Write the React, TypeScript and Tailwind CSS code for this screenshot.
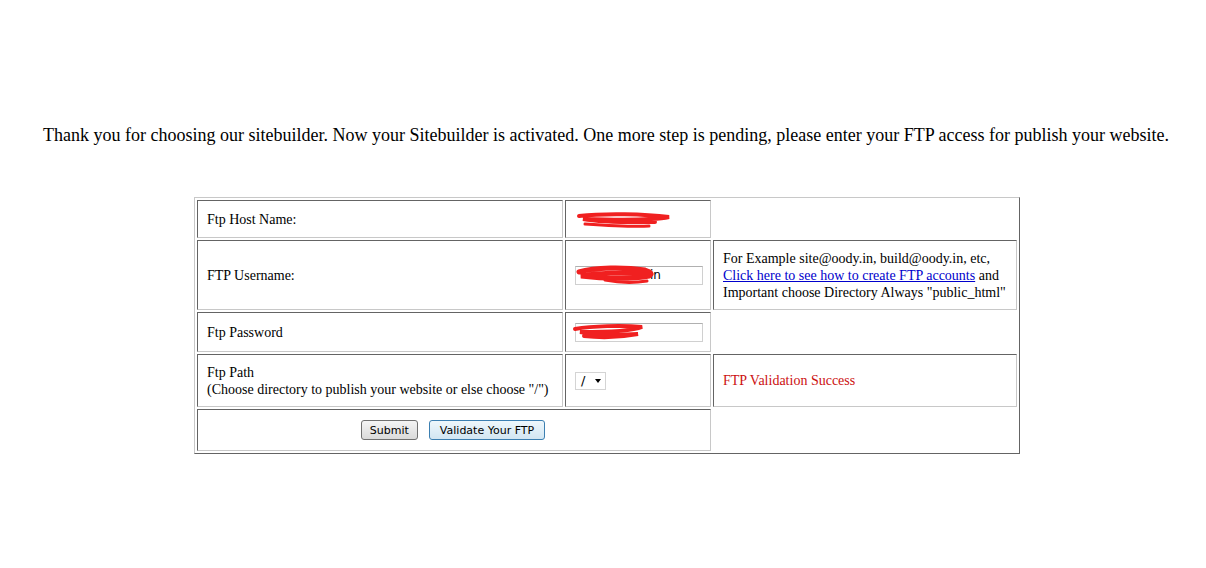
const serif = 'font-["Liberation_Serif","Times_New_Roman",serif]';
const cell =
  'border border-t-[#646464] border-l-[#646464] border-r-[#c8c8c8] border-b-[#c8c8c8] px-[9px] align-middle';
const btn =
  'h-[20px] rounded-[3px] border text-[11px] leading-none font-["DejaVu_Sans",sans-serif] text-black bg-gradient-to-b';

function Scribble({ variant }: { variant: 'host' | 'user' | 'pass' }) {
  if (variant === 'host') {
    return (
      <svg width="100" height="24" viewBox="0 0 100 24" className="block">
        <path d="M4 6 C30 3 70 4 94 7 C80 10 40 10 8 9 C30 13 70 12 80 12" fill="none" stroke="#f02020" strokeWidth="4" strokeLinecap="round" />
        <path d="M10 14 C40 16 60 17 74 16" fill="none" stroke="#f02020" strokeWidth="3" strokeLinecap="round" />
      </svg>
    );
  }
  if (variant === 'user') {
    return (
      <svg width="92" height="24" viewBox="0 0 92 24" className="block">
        <path d="M4 9 C20 4 50 4 70 7 C76 9 78 11 74 13 C60 16 30 16 6 13 C20 10 50 9 70 11" fill="none" stroke="#f02020" strokeWidth="5" strokeLinecap="round" />
        <path d="M30 17 C45 20 60 20 72 18" fill="none" stroke="#f02020" strokeWidth="3" strokeLinecap="round" />
      </svg>
    );
  }
  return (
    <svg width="74" height="20" viewBox="0 0 74 20" className="block">
      <path d="M3 7 C20 4 50 3 70 5 C60 9 30 10 8 10 C25 13 50 13 66 12 C50 15 30 16 12 14" fill="none" stroke="#f02020" strokeWidth="4" strokeLinecap="round" />
    </svg>
  );
}

function TextBox({ value }: { value: string }) {
  return (
    <div className="w-[128px] h-[19px] border border-[#d0d0d0] border-t-[#b0b0b0] bg-white text-[12px] leading-[17px] pl-[74px] font-['DejaVu_Sans',sans-serif] text-black overflow-hidden">
      {value}
    </div>
  );
}

export default function App() {
  return (
    <div className={`min-h-[568px] bg-white text-black pl-[6px] ${serif}`}>
      <div className="pt-[125px] text-center text-[18px] leading-[20px]">
        Thank you for choosing our sitebuilder. Now your Sitebuilder is activated. One more step is pending, please enter your FTP access for publish your website.
      </div>

      <div className="pl-[2px] pt-[52px]">
        <table className="mx-auto w-[826px] table-fixed border-separate border-spacing-[2px] border border-t-[#c8c8c8] border-l-[#c8c8c8] border-r-[#646464] border-b-[#646464] text-[14px] leading-[17px]">
          <colgroup>
            <col className="w-[366px]" />
            <col className="w-[146px]" />
            <col />
          </colgroup>
          <tbody>
            <tr>
              <td className={`${cell} h-[38px]`}>Ftp Host Name:</td>
              <td className={`${cell} h-[38px]`}>
                <div className="pt-[5px]">
                  <Scribble variant="host" />
                </div>
              </td>
              <td></td>
            </tr>
            <tr>
              <td className={`${cell} h-[70px]`}>FTP Username:</td>
              <td className={cell}>
                <div className="relative w-[128px]">
                  <TextBox value="in" />
                  <div className="absolute left-[0px] top-[-3px]">
                    <Scribble variant="user" />
                  </div>
                </div>
              </td>
              <td className={`${cell} pr-[4px] whitespace-nowrap`}>
                For Example site@oody.in, build@oody.in, etc,
                <br />
                <a href="#" className="text-[#0000cc] underline">
                  Click here to see how to create FTP accounts
                </a>{' '}
                and
                <br />
                Important choose Directory Always "public_html"
              </td>
            </tr>
            <tr>
              <td className={`${cell} h-[40px]`}>Ftp Password</td>
              <td className={cell}>
                <div className="relative w-[128px]">
                  <TextBox value="" />
                  <div className="absolute left-[-3px] top-[-1px]">
                    <Scribble variant="pass" />
                  </div>
                </div>
              </td>
              <td></td>
            </tr>
            <tr>
              <td className={`${cell} h-[53px]`}>
                Ftp Path
                <br />
                (Choose directory to publish your website or else choose "/")
              </td>
              <td className={cell}>
                <div className="w-[31px] h-[18px] border border-[#d4d4d4] bg-white flex items-center justify-between pl-[5px] pr-[4px] text-[13px] font-['DejaVu_Sans',sans-serif]">
                  <span className="leading-none">/</span>
                  <span className="w-0 h-0 border-x-[3.5px] border-x-transparent border-t-[4px] border-t-black mt-[1px]" />
                </div>
              </td>
              <td className={`${cell} text-[#cc1010]`}>FTP Validation Success</td>
            </tr>
            <tr>
              <td colSpan={2} className={`${cell} h-[42px]`}>
                <div className="flex justify-center gap-[11px] pr-[2px]">
                  <button className={`${btn} px-[8px] border-[#707070] from-[#f4f4f4] to-[#dadada]`}>
                    Submit
                  </button>
                  <button className={`${btn} px-[10px] border-[#3c7fb1] from-[#eef7fc] to-[#d2e6f2]`}>
                    Validate Your FTP
                  </button>
                </div>
              </td>
              <td></td>
            </tr>
          </tbody>
        </table>
      </div>
    </div>
  );
}
